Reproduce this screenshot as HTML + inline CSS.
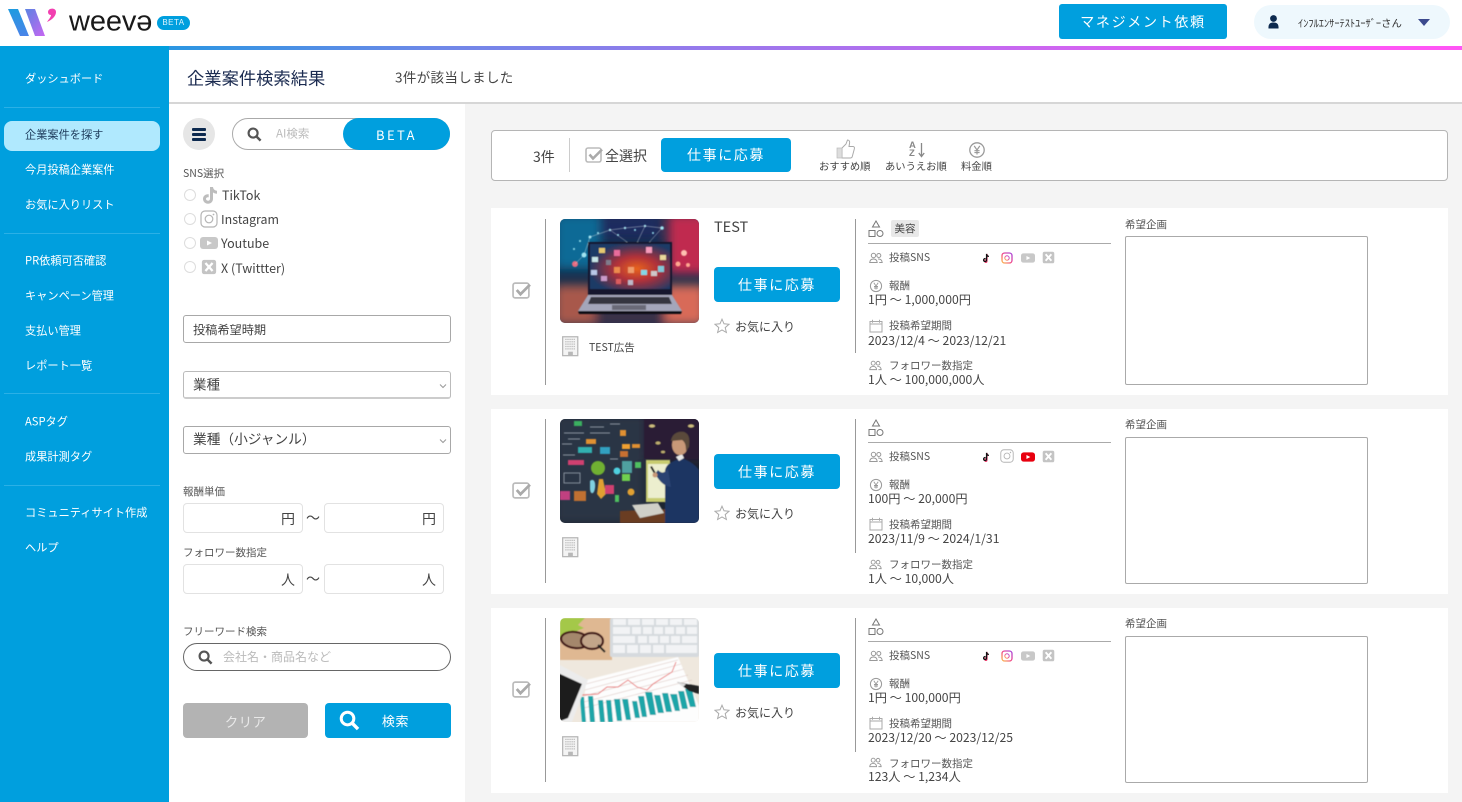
<!DOCTYPE html>
<html lang="ja"><head><meta charset="utf-8"><title>企業案件検索結果</title>
<style>
*{box-sizing:border-box;margin:0;padding:0}
html,body{width:1462px;height:802px;overflow:hidden;background:#f4f4f4}
body{position:relative;font-family:"Noto Sans CJK JP","Liberation Sans",sans-serif;color:#444;font-size:12px}
.a,.t{position:absolute}
.t{white-space:nowrap;line-height:1;transform:translateY(-50%)}
.s{position:absolute;left:25px;color:#fff;font-size:11.2px;white-space:nowrap;line-height:1;transform:translateY(-50%)}
.d{position:absolute;left:4px;width:156px;height:1px;background:#2bb0e6}
.btn{position:absolute;background:#009fde;color:#fff;border-radius:3px;display:flex;align-items:center;justify-content:center;font-size:14px;letter-spacing:1.6px}
.inp{position:absolute;background:#fff;border:1px solid #a8a8a8;border-radius:3px}
.box{position:absolute;background:#fff;border:1px solid #e2e2e2;border-radius:4px}
.card{position:absolute;left:491px;width:957px;background:#fff}
.l{position:absolute;width:1px;background:#999}
.lb{font-size:10.5px;color:#555}
.v{font-size:12.2px;color:#444}
.ta{position:absolute;left:634px;width:243px;background:#fff;border:1px solid #aaa;border-radius:2px}
svg{position:absolute;overflow:visible;display:block}
</style></head><body>
<svg width="0" height="0" style="position:absolute"><defs>
<symbol id="chk" viewBox="0 0 18 18"><rect x="1" y="2" width="15" height="14" rx="2" fill="#fff" stroke="#bbb" stroke-width="1.6"/><path d="M4.5 8.5l3.5 4L17 3.5" fill="none" stroke="#aaa" stroke-width="2.6"/></symbol>
<symbol id="tk" viewBox="0 0 18 18"><path d="M10 1h3c.3 2.200 1.700 3.500 4 3.700v3c-1.500 0-2.900-.4-4-1.300v6.300c0 3-2.200 5-5 5s-5-2-5-4.800c0-3 2.600-5.100 5.700-4.600v3.100c-1.500-.4-2.700.4-2.700 1.500 0 1 .8 1.800 2 1.800s2-.8 2-2z" fill="#bdbdbd"/></symbol>
<symbol id="tkc" viewBox="0 0 18 18"><path d="M11 2l-1 0 -.2 13c-.6 2.500-5 1.800-4-1.400.5-1.500 2-1.900 3-1.600" fill="none" stroke="#f0386b" stroke-width="2" transform="translate(1 .5)"/><path d="M10 1.500v11.500c0 3.300-5.700 3-5.300-.6.200-1.900 2-2.600 3.500-2.300M10 2c.4 2.500 2.200 4 4.300 4.100" fill="none" stroke="#111" stroke-width="2.300"/></symbol>
<symbol id="ig" viewBox="0 0 18 18"><rect x="1" y="1" width="16" height="16" rx="4" fill="#fff" stroke="#b5b5b5" stroke-width="1.200"/><circle cx="9" cy="9" r="3.800" fill="none" stroke="#b5b5b5" stroke-width="1.200"/><circle cx="13.500" cy="4.500" r=".9" fill="#b5b5b5"/></symbol>
<linearGradient id="igg" x1="0" y1="1" x2="1" y2="0"><stop offset="0" stop-color="#fbbd4b"/><stop offset=".5" stop-color="#f0468c"/><stop offset="1" stop-color="#a64be0"/></linearGradient>
<symbol id="igc" viewBox="0 0 18 18"><rect x="1.500" y="1.500" width="15" height="15" rx="4" fill="#fff" stroke="url(#igg)" stroke-width="2"/><circle cx="9" cy="9" r="3.300" fill="none" stroke="url(#igg)" stroke-width="1.500"/></symbol>
<symbol id="yt" viewBox="0 0 18 18"><rect y="3" width="18" height="12" rx="3" fill="#c8c8c8"/><path d="M7 6.500l5 2.500-5 2.500z" fill="#fff"/></symbol>
<symbol id="ytc" viewBox="0 0 18 18"><rect y="3" width="18" height="12" rx="3.500" fill="#e8000f"/><path d="M7 6.500l5 2.500-5 2.500z" fill="#fff"/></symbol>
<symbol id="x" viewBox="0 0 18 18"><rect x="1" y="1" width="16" height="16" rx="2.500" fill="#c4c4c4"/><path d="M5 4.500l8 9M13 4.500l-8 9" stroke="#fff" stroke-width="2.600" fill="none"/></symbol>
<symbol id="shp" viewBox="0 0 16 18"><path d="M8 1l3.500 6h-7z M1 10.500h6v6H1z" fill="none" stroke="#777" stroke-width="1"/><circle cx="12" cy="13.500" r="3" fill="none" stroke="#777" stroke-width="1"/></symbol>
<symbol id="ppl" viewBox="0 0 14 12"><circle cx="4.500" cy="3.500" r="2.200" fill="none" stroke="#999" stroke-width="1"/><circle cx="9.800" cy="3.500" r="2" fill="none" stroke="#999" stroke-width="1"/><path d="M.7 10.500c.2-2.500 1.700-3.500 3.800-3.500s3.500 1 3.700 3.500zM9 7c2.500-.2 4 1 4.200 3.500h-3" fill="none" stroke="#999" stroke-width="1"/></symbol>
<symbol id="yen" viewBox="0 0 14 14"><circle cx="7" cy="7" r="5.600" fill="none" stroke="#999" stroke-width="1"/><path d="M4.800 3.800L7 7l2.200-3.200M7 7v3.500M5 7.500h4M5 9h4" fill="none" stroke="#999" stroke-width=".9"/></symbol>
<symbol id="cal" viewBox="0 0 14 14"><rect x="1" y="2.500" width="12" height="10.500" fill="none" stroke="#aaa" stroke-width="1"/><path d="M1 5h12" stroke="#aaa"/><path d="M3.500 .8v3M10.500 .8v3" stroke="#aaa"/></symbol>
<symbol id="star" viewBox="0 0 16 16"><path d="M8 1.200l2 4.600 5 .5-3.800 3.300 1.200 4.900L8 12l-4.400 2.500 1.200-4.900L1 6.300l5-.5z" fill="none" stroke="#aaa" stroke-width="1"/></symbol>
<symbol id="bld" viewBox="0 0 18 22"><rect x=".7" y=".7" width="16" height="20" fill="#f4f4f4" stroke="#b5b5b5" stroke-width="1.300"/><path d="M3.500 3.500h11M3.500 6h11M3.500 8.500h11M3.500 11h11M3.500 13.500h11" stroke="#b8b8b8" stroke-width="1.300" stroke-dasharray="1.300 .9"/><rect x="6.500" y="16.500" width="5" height="4" fill="#b8b8b8"/></symbol>
<symbol id="mag" viewBox="0 0 16 16"><circle cx="6.500" cy="6.500" r="4.800" fill="none" stroke="currentColor" stroke-width="2.300"/><path d="M10 10l4.500 4.500" stroke="currentColor" stroke-width="2.600"/></symbol>
<symbol id="chev" viewBox="0 0 8 6"><path d="M1 1.500l3 3 3-3" fill="none" stroke="#999" stroke-width="1"/></symbol>
<filter id="b"><feGaussianBlur stdDeviation=".55"/></filter>
<filter id="b1"><feGaussianBlur stdDeviation="1.800"/></filter>
<filter id="b2"><feGaussianBlur stdDeviation="5"/></filter>
<linearGradient id="lg1" x1="0" y1="0" x2="0" y2="1"><stop offset="0" stop-color="#1f9be0"/><stop offset="1" stop-color="#4a84e8"/></linearGradient>
<linearGradient id="lg2" x1="0" y1="0" x2="1" y2="1"><stop offset="0" stop-color="#5b83e2"/><stop offset="1" stop-color="#c766f2"/></linearGradient>
<radialGradient id="scr" cx=".58" cy=".55" r=".6"><stop offset="0" stop-color="#e8641c"/><stop offset=".45" stop-color="#b0303a"/><stop offset="1" stop-color="#1c3a66"/></radialGradient>
</defs></svg>

<!-- header -->
<div class="a" style="left:0;top:0;width:1462px;height:46px;background:#fff"></div>
<svg style="left:0;top:0" width="60" height="46"><polygon points="8,9 18,9 29,36 20,36" fill="url(#lg1)"/><polygon points="25,9 35,9 45,36 35,36" fill="url(#lg2)"/><path d="M50 9c3-1 6 0 6 3 0 4-4 8-9 10 2-3 4-5 4-7-2 0-3-1.500-3-3s1-2.500 2-3z" fill="#f23fb0"/></svg>
<div class="t" style="left:69px;top:22px;font:29px 'Liberation Sans',sans-serif;color:#1a1a1a;letter-spacing:-.1px">weevə</div>
<div class="a" style="left:157px;top:16px;width:33px;height:14px;border-radius:7px;background:#009fde;color:#dff4fd;font:8px/14px 'Liberation Sans',sans-serif;text-align:center;letter-spacing:.5px">BETA</div>
<div class="btn" style="left:1059px;top:4px;width:168px;height:35px;font-size:14px;letter-spacing:1.700px">マネジメント依頼</div>
<div class="a" style="left:1254px;top:5px;width:196px;height:34px;border-radius:17px;background:#eef8fd"></div>
<svg style="left:1268px;top:15px" width="11" height="14" viewBox="0 0 11 14"><circle cx="5.500" cy="3.500" r="3.400" fill="#0d2a4f"/><path d="M.5 13.500c-.3-4.500 1.500-6 5-6s5.300 1.500 5 6z" fill="#0d2a4f"/></svg>
<div class="t" style="left:1298px;top:23px;font-size:10.400px;color:#333">ｲﾝﾌﾙｴﾝｻｰﾃｽﾄﾕｰｻﾞｰさん</div>
<svg style="left:1418px;top:19px" width="12" height="7"><path d="M0 0h12L6 7z" fill="#3c4a8e"/></svg>
<div class="a" style="left:0;top:46px;width:1462px;height:4px;background:linear-gradient(90deg,#009fde 0%,#6f88e8 30%,#b070ee 60%,#ff55f5 92%)"></div>

<!-- sidebar -->
<div class="a" style="left:0;top:46px;width:169px;height:756px;background:#009fde"></div>
<div class="a" style="left:4px;top:121px;width:156px;height:30px;border-radius:8px;background:#b0e9fe"></div>
<div class="s" style="top:79px">ダッシュボード</div><div class="d" style="top:107px"></div>
<div class="s" style="top:135px;color:#1d3a5a">企業案件を探す</div>
<div class="s" style="top:170px">今月投稿企業案件</div>
<div class="s" style="top:204.500px">お気に入りリスト</div><div class="d" style="top:233px"></div>
<div class="s" style="top:261px">PR依頼可否確認</div>
<div class="s" style="top:296px">キャンペーン管理</div>
<div class="s" style="top:331px">支払い管理</div>
<div class="s" style="top:365.500px">レポート一覧</div><div class="d" style="top:393px"></div>
<div class="s" style="top:422px">ASPタグ</div>
<div class="s" style="top:456.500px">成果計測タグ</div><div class="d" style="top:485px"></div>
<div class="s" style="top:513px">コミュニティサイト作成</div>
<div class="s" style="top:548px">ヘルプ</div>

<!-- title -->
<div class="a" style="left:169px;top:50px;width:1293px;height:54px;background:#fff;border-bottom:2px solid #d6d6d6"></div>
<div class="t" style="left:187px;top:77px;font-size:17.300px;color:#1b2b50">企業案件検索結果</div>
<div class="t" style="left:395px;top:77px;font-size:13.500px;letter-spacing:.35px;color:#444">3件が該当しました</div>

<!-- filter panel -->
<div class="a" style="left:169px;top:104px;width:296px;height:698px;background:#fff"></div>
<div class="a" style="left:183px;top:118px;width:32px;height:32px;border-radius:50%;background:#e6e6e6"></div>
<div class="a" style="left:192px;top:127.500px;width:14px;height:3px;border-radius:1px;background:#0d2a4f"></div>
<div class="a" style="left:192px;top:132.500px;width:14px;height:3px;border-radius:1px;background:#0d2a4f"></div>
<div class="a" style="left:192px;top:137.500px;width:14px;height:3px;border-radius:1px;background:#0d2a4f"></div>
<div class="a" style="left:232px;top:118px;width:218px;height:32px;border:1px solid #aaa;border-radius:16px;background:#fff"></div>
<svg style="left:247px;top:127px;color:#555" width="15" height="15"><use href="#mag"/></svg>
<div class="t" style="left:276px;top:134px;font-size:11.500px;color:#bbb">AI検索</div>
<div class="a" style="left:343px;top:118px;width:107px;height:32px;border-radius:16px;background:#009fde;color:#fff;font-size:13px;line-height:33px;text-align:center;letter-spacing:2.400px">BETA</div>

<div class="t lb" style="left:183px;top:174px">SNS選択</div>
<div class="a" style="left:184px;top:189px;width:12px;height:12px;border-radius:50%;border:1.500px solid #ddd"></div>
<svg style="left:200px;top:186px" width="18" height="18"><use href="#tk"/></svg>
<div class="t" style="left:222px;top:195px;font-size:12.500px">TikTok</div>
<div class="a" style="left:184px;top:213px;width:12px;height:12px;border-radius:50%;border:1.500px solid #ddd"></div>
<svg style="left:200px;top:210px" width="18" height="18"><use href="#ig"/></svg>
<div class="t" style="left:221px;top:219px;font-size:12.400px">Instagram</div>
<div class="a" style="left:184px;top:237px;width:12px;height:12px;border-radius:50%;border:1.500px solid #ddd"></div>
<svg style="left:200px;top:234px" width="18" height="18"><use href="#yt"/></svg>
<div class="t" style="left:221px;top:243px;font-size:12.500px">Youtube</div>
<div class="a" style="left:184px;top:261px;width:12px;height:12px;border-radius:50%;border:1.500px solid #ddd"></div>
<svg style="left:201px;top:259px" width="16" height="16"><use href="#x"/></svg>
<div class="t" style="left:221px;top:268px;font-size:12.500px">X (Twittter)</div>

<div class="inp" style="left:183px;top:315px;width:268px;height:28px"></div>
<div class="t" style="left:193px;top:329px;font-size:12.200px">投稿希望時期</div>
<div class="inp" style="left:183px;top:371px;width:268px;height:28px;border-color:#bbb;border-bottom:2px solid #ccc"></div>
<div class="t" style="left:193px;top:384px;font-size:13.500px">業種</div>
<svg style="left:439px;top:383px" width="8" height="6"><use href="#chev"/></svg>
<div class="inp" style="left:183px;top:426px;width:268px;height:28px"></div>
<div class="t" style="left:193px;top:439px;font-size:13.700px">業種（小ジャンル）</div>
<svg style="left:439px;top:438px" width="8" height="6"><use href="#chev"/></svg>

<div class="t lb" style="left:183px;top:492px">報酬単価</div>
<div class="box" style="left:183px;top:503px;width:120px;height:30px"></div>
<div class="t" style="left:281px;top:519px;font-size:14px">円</div>
<div class="t" style="left:306px;top:518px;font-size:14px">～</div>
<div class="box" style="left:324px;top:503px;width:120px;height:30px"></div>
<div class="t" style="left:422px;top:519px;font-size:14px">円</div>
<div class="t lb" style="left:183px;top:553px">フォロワー数指定</div>
<div class="box" style="left:183px;top:564px;width:120px;height:30px"></div>
<div class="t" style="left:281px;top:580px;font-size:14px">人</div>
<div class="t" style="left:306px;top:579px;font-size:14px">～</div>
<div class="box" style="left:324px;top:564px;width:120px;height:30px"></div>
<div class="t" style="left:422px;top:580px;font-size:14px">人</div>

<div class="t lb" style="left:183px;top:632px">フリーワード検索</div>
<div class="a" style="left:183px;top:643px;width:268px;height:28px;border:1px solid #666;border-radius:14px"></div>
<svg style="left:198px;top:650px;color:#555" width="15" height="15"><use href="#mag"/></svg>
<div class="t" style="left:223px;top:657px;font-size:12px;color:#bbb">会社名・商品名など</div>
<div class="btn" style="left:183px;top:703px;width:125px;height:35px;background:#b3b3b3;border-radius:4px;font-size:13.500px;letter-spacing:.3px;color:#e8e8e8">クリア</div>
<div class="btn" style="left:325px;top:703px;width:126px;height:35px;border-radius:4px;padding-left:15px;font-size:13px;letter-spacing:.6px">検索</div>
<svg style="left:339px;top:710px;color:#fff" width="21" height="21"><use href="#mag"/></svg>

<!-- toolbar -->
<div class="a" style="left:491px;top:130px;width:957px;height:50.500px;background:#fff;border:1px solid #b5b5b5;border-radius:4px"></div>
<div class="t" style="left:533px;top:157px;font-size:14px">3件</div>
<div class="l" style="left:569px;top:138px;height:34px;background:#ccc"></div>
<svg style="left:585px;top:146px" width="18" height="18"><use href="#chk"/></svg>
<div class="t" style="left:605px;top:156px;font-size:14px">全選択</div>
<div class="btn" style="left:661px;top:138px;width:130px;height:34px;border-radius:4px">仕事に応募</div>
<svg style="left:836px;top:139px" width="19" height="20" viewBox="0 0 19 20"><path d="M6 9l4-4 1.500-4c1.800 0 2.500 1.500 2 3.500L13 7.500h4c1.300 0 1.800 1.300 1.300 2.500l-2 7.500c-.3 1-1 1.500-2 1.500H6z" fill="#fff" stroke="#aaa" stroke-width="1"/><rect x="1" y="9" width="5" height="10" fill="#ddd" stroke="#bbb" stroke-width=".7"/></svg>
<div class="t" style="left:819px;top:166px;font-size:10.300px">おすすめ順</div>
<div class="t" style="left:909px;top:150px;font:bold 9.500px/8px 'Liberation Sans',sans-serif;white-space:pre;color:#888;transform:translateY(-50%)">A
Z</div>
<svg style="left:918px;top:142px" width="7" height="16"><path d="M3.500 1v13M.8 11l2.700 3.500L6.200 11" fill="none" stroke="#888" stroke-width="1.300"/></svg>
<div class="t" style="left:885px;top:166px;font-size:10.300px">あいうえお順</div>
<svg style="left:968px;top:141px" width="18" height="18"><use href="#yen"/></svg>
<div class="t" style="left:961px;top:166px;font-size:10.300px">料金順</div>

<!-- card 1 -->
<div class="card" style="top:208px;height:187px"></div>
<div class="a" style="left:491px;top:209px;width:957px;height:186px">
<svg style="left:21px;top:72px" width="19" height="19"><use href="#chk"/></svg>
<div class="l" style="left:54px;top:10px;height:166px"></div>
<svg style="left:69px;top:10px;border-radius:5px;overflow:hidden" width="139" height="104" viewBox="0 0 139 104"><rect width="139" height="104" fill="#142e4c"/><g filter="url(#b2)"><rect x="-5" y="-5" width="45" height="55" fill="#0e6a96"/><rect x="40" y="-5" width="60" height="25" fill="#1a2a5e"/><rect x="108" y="-5" width="40" height="60" fill="#c02c50"/><rect x="-5" y="66" width="40" height="40" fill="#a8584c"/><rect x="105" y="66" width="40" height="40" fill="#d86a58"/><rect x="35" y="88" width="70" height="20" fill="#3a3048"/></g><g filter="url(#b)"><g fill="#9ae4f2"><circle cx="30" cy="18" r="1.500"/><circle cx="38" cy="14" r="1"/><circle cx="50" cy="11" r="1.200"/><circle cx="58" cy="16" r="1"/><circle cx="65" cy="9" r="1.200"/><circle cx="75" cy="11" r="1"/><circle cx="85" cy="7" r="1.200"/><circle cx="93" cy="14" r="1"/><circle cx="102" cy="9" r="1.800"/><circle cx="15" cy="45" r="3" fill="#e86a80"/><circle cx="24" cy="36" r="2.500"/><circle cx="14" cy="30" r="1"/><circle cx="20" cy="22" r="1"/><circle cx="124" cy="34" r="3" fill="#ffc0b0"/><circle cx="118" cy="45" r="2.500" fill="#ffa890"/><circle cx="128" cy="46" r="2" fill="#ffa890"/></g><path d="M30 18L50 11 65 9 85 7 102 9M50 11l20 14M85 7L75 28M102 9L85 28M30 18l-6 18M24 36l-9 9" stroke="#cfd8e0" stroke-width=".4" fill="none"/><rect x="28" y="23" width="84" height="53" fill="#14182e"/><rect x="30" y="25" width="80" height="45" fill="url(#scr)"/><g opacity=".95"><rect x="39" y="29" width="6" height="5" fill="#f0d070"/><rect x="54" y="31" width="6" height="6" fill="#f070a0"/><rect x="86" y="28" width="6" height="6" fill="#ffa0c0"/><rect x="100" y="36" width="6" height="5" fill="#f0e0a0"/><rect x="32" y="38" width="6" height="5" fill="#d0f0f0"/><rect x="46" y="41" width="5" height="5" fill="#808090"/><rect x="54" y="48" width="6" height="6" fill="#f09050"/><rect x="68" y="48" width="6" height="6" fill="#f0a070"/><rect x="98" y="47" width="6" height="6" fill="#80d0e0"/><rect x="81" y="51" width="6" height="5" fill="#80e0f0"/><rect x="91" y="52" width="6" height="5" fill="#d0d0d0"/><rect x="31" y="51" width="6" height="5" fill="#c0d0f0"/><rect x="41" y="57" width="6" height="5" fill="#d0a0d0"/><rect x="56" y="60" width="5" height="5" fill="#e06060"/><rect x="68" y="61" width="5" height="5" fill="#c0c0d0"/></g><polygon points="28,76 112,76 122,92 18,92" fill="#a4a6ba"/><polygon points="31,78 109,78 112,85 28,85" fill="#34343f"/><rect x="52" y="86" width="34" height="5" fill="#6a6a78"/><polygon points="18,92 122,92 121,95 19,95" fill="#101018"/></g></svg>
<div class="t" style="left:223px;top:18px;font-size:14.500px">TEST</div>
<div class="btn" style="left:223px;top:58px;width:126px;height:35px;border-radius:4px">仕事に応募</div>
<svg style="left:223px;top:109px" width="16" height="16"><use href="#star"/></svg>
<div class="t" style="left:244px;top:118px;font-size:12px">お気に入り</div>
<svg style="left:71px;top:127px" width="17" height="21"><use href="#bld"/></svg>
<div class="t" style="left:98px;top:139px;font-size:10.500px">TEST広告</div>
<div class="l" style="left:364px;top:10px;height:134px"></div>
<svg style="left:377px;top:11px" width="16" height="18"><use href="#shp"/></svg>
<div class="a" style="left:400px;top:11px;width:28px;height:17px;background:#e8e8e8;border-radius:2px;font-size:10.500px;line-height:17px;text-align:center">美容</div>
<div class="a" style="left:377px;top:34px;width:243px;height:1px;background:#aaa"></div>
<svg style="left:378px;top:43px" width="14" height="12"><use href="#ppl"/></svg>
<div class="t lb" style="left:398px;top:49px">投稿SNS</div>
<svg style="left:490px;top:44px" width="10" height="10"><use href="#tkc"/></svg>
<svg style="left:510px;top:43px" width="12" height="12"><use href="#igc"/></svg>
<svg style="left:530px;top:42px" width="14" height="14"><use href="#yt"/></svg>
<svg style="left:551px;top:42px" width="13" height="13"><use href="#x"/></svg>
<svg style="left:378px;top:70px" width="14" height="14"><use href="#yen"/></svg>
<div class="t lb" style="left:398px;top:77px">報酬</div>
<div class="t v" style="left:377px;top:90px">1円 ～ 1,000,000円</div>
<svg style="left:378px;top:110px" width="14" height="14"><use href="#cal"/></svg>
<div class="t lb" style="left:398px;top:117px">投稿希望期間</div>
<div class="t v" style="left:377px;top:130.500px">2023/12/4 ～ 2023/12/21</div>
<svg style="left:378px;top:151px" width="13" height="11"><use href="#ppl"/></svg>
<div class="t lb" style="left:398px;top:157px">フォロワー数指定</div>
<div class="t v" style="left:377px;top:170px">1人 ～ 100,000,000人</div>
<div class="t lb" style="left:634px;top:16px">希望企画</div>
<div class="ta" style="top:27px;height:149px"></div>
</div>

<!-- card 2 -->
<div class="card" style="top:409px;height:185px"></div>
<div class="a" style="left:491px;top:409px;width:957px;height:185px">
<svg style="left:21px;top:72px" width="19" height="19"><use href="#chk"/></svg>
<div class="l" style="left:54px;top:10px;height:164px"></div>
<svg style="left:69px;top:10px;border-radius:5px;overflow:hidden" width="139" height="104" viewBox="0 0 139 104"><rect width="139" height="104" fill="#1c2430"/><g filter="url(#b2)"><rect x="-5" y="-5" width="90" height="110" fill="#2a3444"/><rect x="85" y="-5" width="60" height="45" fill="#2a1c38"/></g><g filter="url(#b)"><rect x="84" y="0" width="55" height="40" fill="#2a1c35"/><rect x="86" y="41" width="24" height="42" fill="#c8cc70"/><rect x="88" y="45" width="22" height="34" fill="#eceece"/><ellipse cx="92" cy="7" rx="3" ry="1.500" fill="#d0c080"/><ellipse cx="131" cy="7" rx="3" ry="1.500" fill="#d0c080"/><ellipse cx="98" cy="24" rx="2.500" ry="1.500" fill="#c0b070"/><ellipse cx="103" cy="33" rx="2" ry="1.200" fill="#c0b070"/><g><rect x="14" y="2" width="8" height="5" fill="#3ab060"/><rect x="60" y="11" width="6" height="6" fill="#e09030"/><rect x="26" y="20" width="10" height="5" fill="#e09030"/><rect x="18" y="28" width="14" height="6" fill="#30b0b0"/><rect x="40" y="28" width="10" height="7" fill="#30a0c0"/><rect x="62" y="25" width="8" height="5" fill="#f0a030"/><rect x="72" y="25" width="8" height="4" fill="#e09030"/><rect x="60" y="32" width="8" height="6" fill="#c87030"/><rect x="8" y="41" width="16" height="5" fill="#d04070"/><circle cx="38" cy="49" r="7" fill="#70b030"/><rect x="62" y="42" width="10" height="12" fill="#50a0a0"/><circle cx="57" cy="52" r="3.500" fill="#50d0e0"/><rect x="62" y="55" width="8" height="7" fill="#70d050"/><rect x="75" y="43" width="6" height="6" fill="#50c060"/><path d="M30 62c3-3 6 0 5 7s-5 7-5 0z" fill="#80d0e0"/><path d="M39 60l4 0 3 15-5 5-4-5z" fill="#e0a030"/><rect x="45" y="66" width="9" height="9" fill="#d04070"/><rect x="14" y="72" width="12" height="10" fill="#c07030"/><rect x="0" y="72" width="10" height="9" fill="#c04080"/><rect x="55" y="76" width="4" height="7" fill="#50c060"/><circle cx="71" cy="73" r="3.500" fill="#e0a030"/><rect x="4" y="54" width="16" height="10" fill="none" stroke="#9aa4b0" stroke-width=".8"/><path d="M4 14h20M2 25h10M30 8h14M50 5h10M3 36h12M30 14h20M8 20h12M50 40h8" stroke="#8a94a0" stroke-width="1"/></g><polygon points="60,92 108,90 108,104 60,104" fill="#6a3c24"/><polygon points="72,86 98,84 104,94 80,99" fill="#d0d0c8"/><path d="M105 104V52c1-8 9-10 16-13 7 2 14 6 18 12v53z" fill="#1e3462"/><path d="M108 50c-4 4-6 5-10 1l-3 4c4 6 8 12 16 13z" fill="#2a4272"/><path d="M116 38l6-3 2 4-5 3z" fill="#e8e8e8"/><ellipse cx="120" cy="26" rx="8" ry="10" fill="#c89878"/><path d="M111 22c1-8 8-10 13-9 5 2 6 6 5 15l-3 4c0-6-1-9-4-11z" fill="#5a4a3a"/><rect x="92" y="47" width="2" height="8" transform="rotate(-30 93 51)" fill="#111"/><circle cx="95" cy="56" r="2.500" fill="#c89878"/></g></svg>
<div class="btn" style="left:223px;top:45px;width:126px;height:35px;border-radius:4px">仕事に応募</div>
<svg style="left:223px;top:96px" width="16" height="16"><use href="#star"/></svg>
<div class="t" style="left:244px;top:105px;font-size:12px">お気に入り</div>
<svg style="left:71px;top:128px" width="17" height="21"><use href="#bld"/></svg>
<div class="l" style="left:364px;top:10px;height:134px"></div>
<svg style="left:377px;top:10px" width="16" height="18"><use href="#shp"/></svg>
<div class="a" style="left:377px;top:33px;width:243px;height:1px;background:#aaa"></div>
<svg style="left:378px;top:42px" width="14" height="12"><use href="#ppl"/></svg>
<div class="t lb" style="left:398px;top:48px">投稿SNS</div>
<svg style="left:490px;top:43px" width="10" height="10"><use href="#tkc"/></svg>
<svg style="left:509px;top:40px" width="14" height="14" viewBox="0 0 18 18"><use href="#ig"/></svg>
<svg style="left:530px;top:41px" width="14" height="14"><use href="#ytc"/></svg>
<svg style="left:551px;top:41px" width="13" height="13"><use href="#x"/></svg>
<svg style="left:378px;top:69px" width="14" height="14"><use href="#yen"/></svg>
<div class="t lb" style="left:398px;top:76px">報酬</div>
<div class="t v" style="left:377px;top:89px">100円 ～ 20,000円</div>
<svg style="left:378px;top:108px" width="14" height="14"><use href="#cal"/></svg>
<div class="t lb" style="left:398px;top:116px">投稿希望期間</div>
<div class="t v" style="left:377px;top:129px">2023/11/9 ～ 2024/1/31</div>
<svg style="left:378px;top:150px" width="13" height="11"><use href="#ppl"/></svg>
<div class="t lb" style="left:398px;top:156px">フォロワー数指定</div>
<div class="t v" style="left:377px;top:169px">1人 ～ 10,000人</div>
<div class="t lb" style="left:634px;top:16px">希望企画</div>
<div class="ta" style="top:28px;height:147px"></div>
</div>

<!-- card 3 -->
<div class="card" style="top:608px;height:185px"></div>
<div class="a" style="left:491px;top:608px;width:957px;height:185px">
<svg style="left:21px;top:72px" width="19" height="19"><use href="#chk"/></svg>
<div class="l" style="left:54px;top:10px;height:164px"></div>
<svg style="left:69px;top:10px;border-radius:5px;overflow:hidden" width="139" height="104" viewBox="0 0 139 104"><rect width="139" height="104" fill="#efe8de"/><g filter="url(#b)"><rect x="0" y="0" width="52" height="42" fill="#dfb892"/><rect x="50" y="0" width="89" height="39" rx="2" fill="#d6dade"/><g fill="#f2f3f5"><rect x="53" y="1" width="13" height="6"/><rect x="68" y="1" width="12" height="6"/><rect x="82" y="1" width="12" height="6"/><rect x="96" y="1" width="12" height="6"/><rect x="110" y="1" width="12" height="6"/><rect x="124" y="1" width="13" height="6"/><rect x="53" y="9" width="17" height="7"/><rect x="72" y="9" width="9" height="7"/><rect x="83" y="9" width="9" height="7"/><rect x="94" y="9" width="9" height="7"/><rect x="105" y="9" width="9" height="7"/><rect x="116" y="9" width="9" height="7"/><rect x="127" y="9" width="10" height="7"/><rect x="53" y="18" width="22" height="7"/><rect x="78" y="18" width="9" height="7"/><rect x="89" y="18" width="9" height="7"/><rect x="100" y="18" width="9" height="7"/><rect x="111" y="18" width="9" height="7"/><rect x="122" y="18" width="15" height="7"/><rect x="53" y="27" width="12" height="8"/><rect x="67" y="27" width="11" height="8"/><rect x="80" y="27" width="11" height="8"/><rect x="93" y="27" width="11" height="8"/><rect x="106" y="27" width="31" height="8"/></g><path d="M0 0h25l-7 7 6 3-12 5-2 5H0z" fill="#a4c84a"/><ellipse cx="15" cy="22" rx="14" ry="8" fill="#a4876c" stroke="#431614" stroke-width="2.200" transform="rotate(8 15 22)"/><ellipse cx="32" cy="23" rx="11" ry="8" fill="#c2a58a" stroke="#431614" stroke-width="2.200"/><path d="M38 27l7 7" stroke="#222" stroke-width="2"/><polygon points="26,62 118,39 139,88 139,104 22,104" fill="#fdfdfd"/><path d="M24 78l100-27M25 72l96-26M26 66l92-24M24 84l104-27M24 90l108-28" stroke="#dcc6c0" stroke-width=".6"/><polyline points="22,77 38,76 47,69 58,69 68,62 77,69 87,72 93,66 112,54 116,44" fill="none" stroke="#e87070" stroke-width=".9"/><g fill="#1aa5a8"><polygon points="20,79 24,79 26,104 22,104"/><polygon points="28,78 33,78 35,104 30,104"/><polygon points="38,82 43,82 45,104 40,104"/><polygon points="46,82 51,82 53,104 48,104"/><polygon points="54,81 60,81 62,103 57,103"/><polygon points="62,81 68,81 71,102 66,102"/><polygon points="72,83 77,83 80,100 75,100"/><polygon points="78,78 84,78 87,99 82,99"/><polygon points="85,74 92,74 96,97 90,97"/><polygon points="94,77 100,77 104,95 98,95"/><polygon points="102,75 108,75 112,94 106,94"/><polygon points="110,76 117,76 120,93 115,93"/><polygon points="118,73 124,73 128,91 122,91"/><polygon points="125,71 132,71 136,89 130,89"/></g><path d="M-2 46l30 16-16 42H-2z" fill="#ececec"/><path d="M-2 55l24 11-14 34-10 4z" fill="#1c1c1c"/><path d="M117 64l22 4v8l-10-3z" fill="#222"/><path d="M117 64l9 2-3 3z" fill="#ddd"/></g></svg>
<div class="btn" style="left:223px;top:45px;width:126px;height:35px;border-radius:4px">仕事に応募</div>
<svg style="left:223px;top:96px" width="16" height="16"><use href="#star"/></svg>
<div class="t" style="left:244px;top:105px;font-size:12px">お気に入り</div>
<svg style="left:71px;top:128px" width="17" height="21"><use href="#bld"/></svg>
<div class="l" style="left:364px;top:10px;height:134px"></div>
<svg style="left:377px;top:10px" width="16" height="18"><use href="#shp"/></svg>
<div class="a" style="left:377px;top:33px;width:243px;height:1px;background:#aaa"></div>
<svg style="left:378px;top:42px" width="14" height="12"><use href="#ppl"/></svg>
<div class="t lb" style="left:398px;top:48px">投稿SNS</div>
<svg style="left:490px;top:43px" width="10" height="10"><use href="#tkc"/></svg>
<svg style="left:510px;top:42px" width="12" height="12"><use href="#igc"/></svg>
<svg style="left:530px;top:41px" width="14" height="14"><use href="#yt"/></svg>
<svg style="left:551px;top:41px" width="13" height="13"><use href="#x"/></svg>
<svg style="left:378px;top:69px" width="14" height="14"><use href="#yen"/></svg>
<div class="t lb" style="left:398px;top:76px">報酬</div>
<div class="t v" style="left:377px;top:89px">1円 ～ 100,000円</div>
<svg style="left:378px;top:108px" width="14" height="14"><use href="#cal"/></svg>
<div class="t lb" style="left:398px;top:116px">投稿希望期間</div>
<div class="t v" style="left:377px;top:129px">2023/12/20 ～ 2023/12/25</div>
<svg style="left:378px;top:149px" width="13" height="11"><use href="#ppl"/></svg>
<div class="t lb" style="left:398px;top:156px">フォロワー数指定</div>
<div class="t v" style="left:377px;top:168px">123人 ～ 1,234人</div>
<div class="t lb" style="left:634px;top:16px">希望企画</div>
<div class="ta" style="top:28px;height:147px"></div>
</div>
</body></html>
